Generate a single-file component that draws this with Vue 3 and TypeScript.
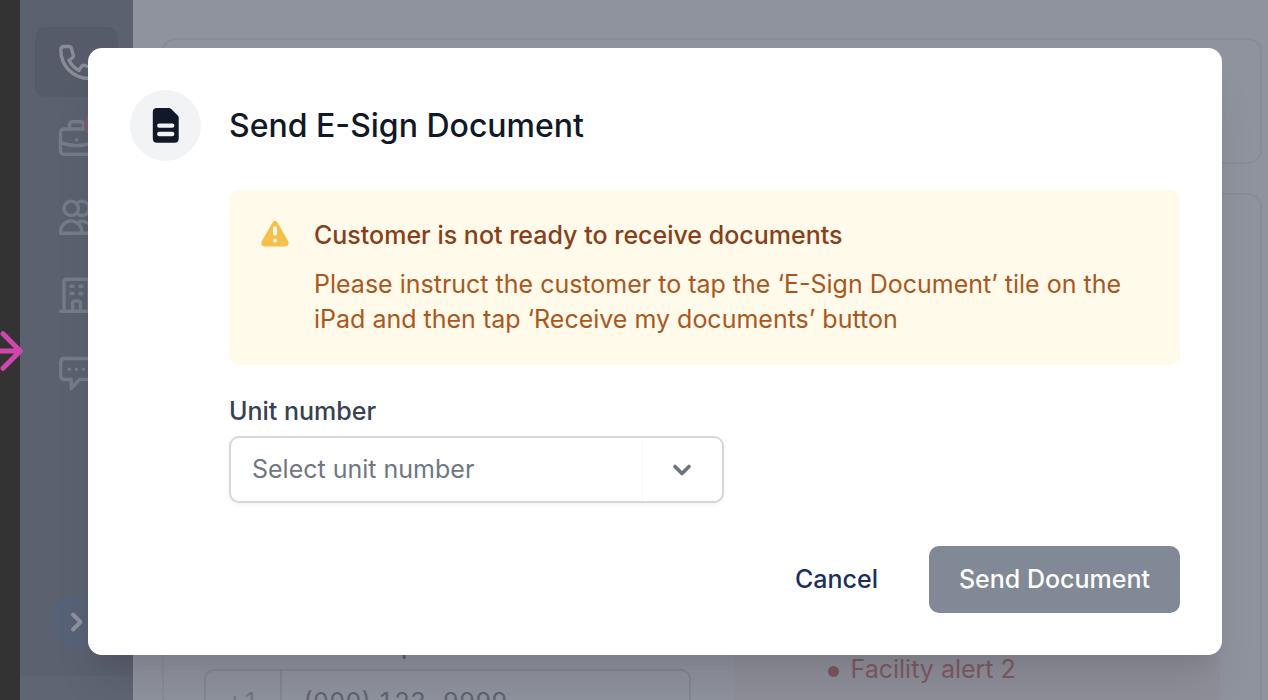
<script setup lang="ts">
import { ref } from 'vue'

const unit = ref('')
const units = ['101', '102', '103']
const phone = ref('(000) 123-9999')
</script>

<template>
  <div class="app">
    <div class="edge"></div>
    <nav class="sidebar" aria-label="Main">
      <a class="tile active" href="#" aria-label="Calls">
        <svg viewBox="0 0 35 35">
          <path d="M1.8 5C1.8 2.8 3.2 1.5 5 1.5H10C11.4 1.5 12 2 12.3 3.2L14.3 10C14.7 11.6 14.2 12.3 13.1 13L10 15.3C12.2 20 15.3 23.2 20 25.4L22.3 21.8C23 20.5 24.2 20.1 25.5 20.5L32 22.5C33 22.8 33.5 23.6 33.5 24.6V30.5C33.5 32.4 32.2 33.5 30.3 33.5C14.5 33.5 1.8 21 1.8 5Z" />
        </svg>
      </a>
      <a class="tile" href="#" aria-label="Work">
        <svg viewBox="0 0 35 35">
          <rect x="1.5" y="6" width="32" height="25.3" rx="3.5" />
          <path d="M10.5 6V2Q10.5-1.2 13.7-1.2H21.3Q24.5-1.2 24.5 2V6M1.5 19.7Q17.5 25.5 33.5 19.7" />
          <circle class="solid" cx="17.5" cy="16.7" r="1.8" />
        </svg>
        <span class="badge"></span>
      </a>
      <a class="tile" href="#" aria-label="Customers">
        <svg viewBox="0 0 35 35">
          <circle cx="12.2" cy="7.3" r="7.2" />
          <path d="M1.6 32.3V30.5A10.6 10.6 0 0 1 22.8 30.5V32.3ZM17.7 2.3A7.2 7.2 0 1 1 17.7 12.3M20.5 20.5A10.6 10.6 0 0 1 33.5 30.5V32.3H22.8" />
        </svg>
      </a>
      <a class="tile" href="#" aria-label="Facilities">
        <svg viewBox="0 0 35 35">
          <path d="M5 32.3V3Q5 .2 7.8 .2H27.2Q30 .2 30 3V32.3M1.6 32.3H33.4M13.6 32.3V24.3Q13.6 22 15.9 22H19.1Q21.4 22 21.4 24.3V32.3" />
          <g class="solid">
            <ellipse cx="13" cy="7.3" rx="2.7" ry="2" />
            <ellipse cx="21.9" cy="7.3" rx="2.7" ry="2" />
            <ellipse cx="13" cy="14.4" rx="2.7" ry="2" />
            <ellipse cx="21.9" cy="14.4" rx="2.7" ry="2" />
          </g>
        </svg>
      </a>
      <a class="tile" href="#" aria-label="Messages">
        <svg viewBox="0 0 35 35">
          <path d="M5.2 1.5H29.8Q33.3 1.5 33.3 5V19Q33.3 22.5 29.8 22.5H20.5L12.3 31.5V22.5H5.2Q1.7 22.5 1.7 19V5Q1.7 1.5 5.2 1.5Z" />
          <g class="solid">
            <circle cx="10.3" cy="12.2" r="1.8" />
            <circle cx="17.4" cy="12.2" r="1.8" />
            <circle cx="24.5" cy="12.2" r="1.8" />
          </g>
        </svg>
      </a>
      <button class="expand" type="button" aria-label="Expand menu">
        <svg viewBox="0 0 16 24"><path d="M4 4.5L11.5 12L4 19.5" /></svg>
      </button>
      <div class="sidebar-foot"></div>
    </nav>

    <main class="page">
      <section class="card summary"></section>
      <section class="card details">
        <div class="contact">
          <label for="phone">Customer home phone</label>
          <div class="phone">
            <span class="code">+1</span>
            <input id="phone" v-model="phone" type="tel" />
          </div>
        </div>
        <div class="alerts">
          <ul>
            <li>Facility alert 2</li>
          </ul>
        </div>
      </section>
    </main>

    <svg class="pointer" viewBox="0 0 24 42"><path d="M-2 21H20M3 3.7L20.3 21L3 38.3" /></svg>

    <div class="overlay">
      <div class="modal" role="dialog" aria-modal="true" aria-labelledby="title">
        <header>
          <span class="doc">
            <svg viewBox="0 0 27 35">
              <path d="M4.3 0H16.8Q18.2 0 19.2 1L25.7 7.5Q26.7 8.5 26.7 9.9V30.5Q26.7 34.7 22.5 34.7H5Q.8 34.7 .8 30.5V4.2Q.8 0 5 0Z" />
              <path class="lines" d="M7.3 17.6H20.2M7.3 26H20.2" />
            </svg>
          </span>
          <h1 id="title">Send E-Sign Document</h1>
        </header>
        <div class="body">
          <div class="notice" role="alert">
            <svg viewBox="0 0 28 26">
              <path d="M11.2 1.9Q14-2.2 16.8 1.9L27.2 20.2Q29 25.2 24.2 25.4H3.8Q-1 25.2 .8 20.2Z" />
              <path class="mark" d="M14 7.3V12.6" />
              <circle cx="14" cy="19.6" r="2" />
            </svg>
            <div>
              <h2>Customer is not ready to receive documents</h2>
              <p>Please instruct the customer to tap the ‘E-Sign Document’ tile on the iPad and then tap ‘Receive my documents’ button</p>
            </div>
          </div>
          <label class="unit-label" for="unit">Unit number</label>
          <div class="select">
            <select id="unit" v-model="unit">
              <option value="" disabled>Select unit number</option>
              <option v-for="u in units" :key="u" :value="u">{{ u }}</option>
            </select>
            <span class="arrow">
              <svg viewBox="0 0 20 12"><path d="M3 2.5L10 9.5L17 2.5" /></svg>
            </span>
          </div>
        </div>
        <footer>
          <button class="cancel" type="button">Cancel</button>
          <button class="send" type="button">Send Document</button>
        </footer>
      </div>
    </div>
  </div>
</template>

<style>
body {
  margin: 0;
  overflow: hidden;
}
</style>

<style scoped>
* {
  box-sizing: border-box;
}
.app {
  position: relative;
  display: flex;
  height: 100vh;
  overflow: hidden;
  background: #8f939e;
  font-family: Inter, "Liberation Sans", sans-serif;
  font-size: 25px;
  line-height: 35px;
}
svg {
  display: block;
  flex: none;
  overflow: visible;
  fill: none;
  stroke-linecap: round;
  stroke-linejoin: round;
}
button,
input,
select {
  margin: 0;
  font: inherit;
}
.edge {
  flex: none;
  width: 20px;
  background: #333333;
}
.sidebar {
  flex: none;
  display: flex;
  flex-direction: column;
  gap: 8px;
  width: 113px;
  padding-top: 27px;
  background: #5b616f;
}
.tile {
  position: relative;
  display: flex;
  flex: none;
  align-items: center;
  justify-content: center;
  height: 70px;
  margin: 0 15px;
  border-radius: 10px;
  color: #757b88;
}
.tile.active {
  background: #555b68;
  color: #888c96;
}
.tile svg {
  width: 35px;
  height: 35px;
  stroke: currentColor;
  stroke-width: 3.4;
}
.tile .solid {
  fill: currentColor;
  stroke: none;
}
.badge {
  position: absolute;
  top: 6px;
  right: 6px;
  width: 28px;
  height: 28px;
  border-radius: 50%;
  background: #7c5c68;
}
.expand {
  display: flex;
  align-items: center;
  justify-content: center;
  width: 53px;
  height: 53px;
  margin: auto auto 20px;
  padding: 0;
  border: 0;
  border-radius: 50%;
  background: #586276;
}
.expand svg {
  width: 16px;
  height: 24px;
  stroke: #8d919c;
  stroke-width: 4;
}
.sidebar-foot {
  height: 24px;
  background: #5f6573;
}
.page {
  flex: 1;
  display: flex;
  flex-direction: column;
  gap: 29px;
  padding: 38px 6px 0 29px;
}
.card {
  border: 2px solid #888c97;
  border-radius: 14px;
}
.summary {
  flex: none;
  height: 126px;
}
.details {
  flex: 1;
  display: grid;
  grid-template-columns: 1fr 1fr;
  gap: 43px;
  padding: 0 40px;
  border-bottom: 0;
  border-radius: 14px 14px 0 0;
}
.contact {
  min-width: 0;
  padding-top: 433px;
  color: #5a5f6c;
}
.contact label {
  display: block;
  margin-bottom: 6px;
  font-weight: 500;
}
.phone {
  display: flex;
  height: 67px;
  border: 2px solid #838792;
  border-radius: 10px;
  font-variant-numeric: tabular-nums;
}
.code {
  display: flex;
  align-items: center;
  justify-content: center;
  width: 76px;
  border-right: 2px solid #838792;
  color: #737783;
}
.phone input {
  flex: 1;
  min-width: 0;
  padding: 0 21px;
  border: 0;
  background: transparent;
  color: #5f6471;
  font-variant-numeric: tabular-nums;
}
.alerts {
  padding: 457px 0 0 92px;
  background: #8e8f99;
  color: #805a65;
}
.alerts ul {
  margin: 0;
  padding: 0;
  list-style: none;
}
.alerts li {
  display: flex;
  align-items: center;
  gap: 12px;
}
.alerts li::before {
  content: "";
  width: 11px;
  height: 11px;
  margin: 3px 0 0 2px;
  border-radius: 50%;
  background: #7d5661;
}
.pointer {
  position: absolute;
  top: calc(50% - 20px);
  left: 0;
  width: 24px;
  height: 42px;
  stroke: #d146ad;
  stroke-width: 5;
}
.overlay {
  position: absolute;
  inset: 0;
  padding: 48px 46px 0 88px;
}
.modal {
  padding: 42px;
  border-radius: 14px;
  background: #ffffff;
  box-shadow: 0 35px 44px -9px rgba(0, 0, 0, 0.1), 0 14px 18px -9px rgba(0, 0, 0, 0.06);
}
header {
  display: flex;
  align-items: center;
  gap: 28px;
}
.doc {
  display: flex;
  align-items: center;
  justify-content: center;
  width: 71px;
  height: 71px;
  border-radius: 50%;
  background: #f2f3f5;
}
.doc svg {
  width: 27px;
  height: 35px;
  fill: #111827;
}
.doc .lines {
  stroke: #f2f3f5;
  stroke-width: 4.4;
}
h1,
h2,
p {
  margin: 0;
}
h1 {
  color: #111827;
  font-size: 32px;
  font-weight: 500;
  line-height: 44px;
}
.body {
  padding: 29px 0 0 99px;
}
.notice {
  display: flex;
  gap: 25px;
  padding: 28px 32px;
  border-radius: 10px;
  background: #fffaea;
}
.notice svg {
  width: 28px;
  height: 26px;
  margin-top: 3px;
  fill: #f4c04b;
}
.notice .mark {
  stroke: #fffaea;
  stroke-width: 4;
}
.notice circle {
  fill: #fffaea;
}
h2 {
  margin-bottom: 14px;
  color: #86401a;
  font-size: 25px;
  font-weight: 500;
}
p {
  color: #a8581f;
}
.unit-label {
  display: block;
  margin: 29px 0 7px;
  color: #374151;
  font-weight: 500;
}
.select {
  position: relative;
  width: 52%;
}
select {
  display: block;
  width: 100%;
  height: 67px;
  padding: 0 82px 0 21px;
  border: 2px solid #d4d7dc;
  border-radius: 10px;
  appearance: none;
  background: #ffffff;
  box-shadow: 0 2px 4px rgba(0, 0, 0, 0.05);
  color: #6f7684;
}
.arrow {
  position: absolute;
  top: 2px;
  right: 2px;
  bottom: 2px;
  display: flex;
  align-items: center;
  justify-content: center;
  width: 80px;
  border-left: 1px solid #f8f9fa;
  pointer-events: none;
}
.arrow svg {
  width: 20px;
  height: 12px;
  stroke: #6b7280;
  stroke-width: 3.6;
}
footer {
  display: flex;
  justify-content: flex-end;
  gap: 21px;
  margin-top: 43px;
}
footer button {
  height: 67px;
  padding: 0 30px;
  border: 0;
  border-radius: 10px;
  font-weight: 500;
}
.cancel {
  background: transparent;
  color: #1c2f59;
}
.send {
  background: #828996;
  color: #ffffff;
}
</style>
